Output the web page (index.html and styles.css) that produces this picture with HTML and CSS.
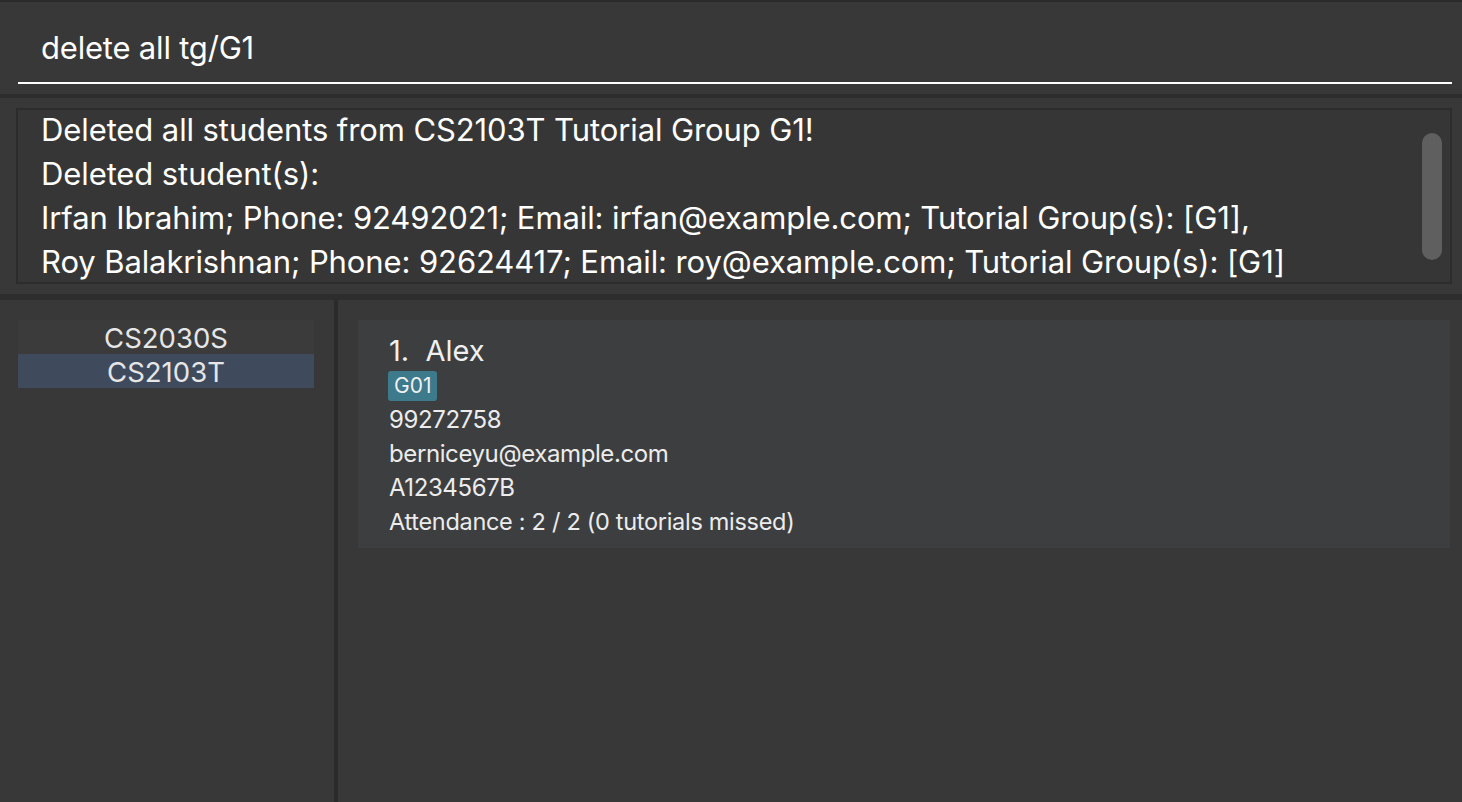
FILE: index.html
```html
<!DOCTYPE html>
<html>
<head>
<meta charset="utf-8">
<link rel="stylesheet" href="styles.css">
</head>
<body>
<div class="app">
  <div class="top-edge"></div>
  <div class="command">
    <div class="command-input">delete all tg/G1</div>
  </div>
  <div class="sep"></div>
  <div class="result">
    <div class="result-box">
      <div class="result-text">
        <div>Deleted all students from CS2103T Tutorial Group G1!</div>
        <div>Deleted student(s):</div>
        <div>Irfan Ibrahim; Phone: 92492021; Email: irfan@example.com; Tutorial Group(s): [G1],</div>
        <div>Roy Balakrishnan; Phone: 92624417; Email: roy@example.com; Tutorial Group(s): [G1]</div>
      </div>
      <div class="scrollbar"></div>
    </div>
  </div>
  <div class="sep sep-b"></div>
  <div class="main">
    <div class="sidebar">
      <div class="course">CS2030S</div>
      <div class="course selected">CS2103T</div>
    </div>
    <div class="divider"></div>
    <div class="content">
      <div class="card">
        <div class="name">1.&nbsp; Alex</div>
        <div class="tags"><span class="tag">G01</span></div>
        <div class="line">99272758</div>
        <div class="line">berniceyu@example.com</div>
        <div class="line">A1234567B</div>
        <div class="line small">Attendance : 2 / 2 (0 tutorials missed)</div>
      </div>
    </div>
  </div>
</div>
</body>
</html>
```

FILE: styles.css
```css
* { box-sizing: border-box; }
html, body {
  margin: 0;
  padding: 0;
  background: #383838;
  width: 1462px;
  height: 802px;
  overflow: hidden;
  font-family: "Inter", "Roboto", sans-serif;
  color: #ffffff;
}
.app {
  display: flex;
  flex-direction: column;
  height: 802px;
}
.top-edge {
  height: 2px;
  background: #2b2b2b;
}
.command {
  height: 92px;
  padding: 0 10px 0 18px;
}
.command-input {
  border-bottom: 2px solid #ffffff;
  padding: 26px 0 0 23px;
  font-size: 31px;
  line-height: 40px;
  letter-spacing: -0.2px;
  box-sizing: content-box;
  height: 54px;
}
.sep {
  height: 4px;
  background: #2d2d2d;
}
.result {
  height: 196px;
  padding: 10px 10px 0 16px;
}
.result-box {
  height: 176px;
  border: 2px solid #2c2c2c;
  background: #363636;
  display: flex;
}
.result-text {
  flex: 1;
  margin-top: -2px;
  padding: 0 0 0 23px;
  font-size: 31px;
  line-height: 44px;
  letter-spacing: -0.1px;
  white-space: nowrap;
  overflow: hidden;
}
.scrollbar {
  width: 20px;
  height: 127px;
  margin: 23px 8px 0 0;
  background: #5f5f5f;
  border-radius: 10px;
}
.sep-b {
  height: 6px;
}
.main {
  flex: 1;
  display: flex;
}
.sidebar {
  width: 334px;
  padding: 20px 20px 0 18px;
}
.course {
  height: 34px;
  background: #3b3b3b;
  text-align: center;
  font-size: 27.5px;
  line-height: 36px;
  color: #e6e6e6;
}
.course.selected {
  background: #3f4b5d;
}
.divider {
  width: 4px;
  background: #2b2b2b;
}
.content {
  flex: 1;
  padding: 20px 12px 0 20px;
}
.card {
  background: #3d3e40;
  height: 228px;
  padding: 13px 0 0 31px;
}
.name {
  font-size: 29px;
  line-height: 36px;
  color: #f0f0f0;
}
.tags {
  display: flex;
  height: 34px;
  padding-top: 2px;
}
.tag {
  display: block;
  height: 30px;
  background: #3d7a8c;
  border-radius: 3px;
  font-size: 21px;
  line-height: 30px;
  padding: 0 6px 0 6px;
  color: #f0f0f0;
  margin-left: -1px;
}
.line {
  font-size: 24px;
  line-height: 34px;
  color: #ececec;
  letter-spacing: -0.4px;
}
.line.small {
  font-size: 23.5px;
  letter-spacing: -0.3px;
}
```
